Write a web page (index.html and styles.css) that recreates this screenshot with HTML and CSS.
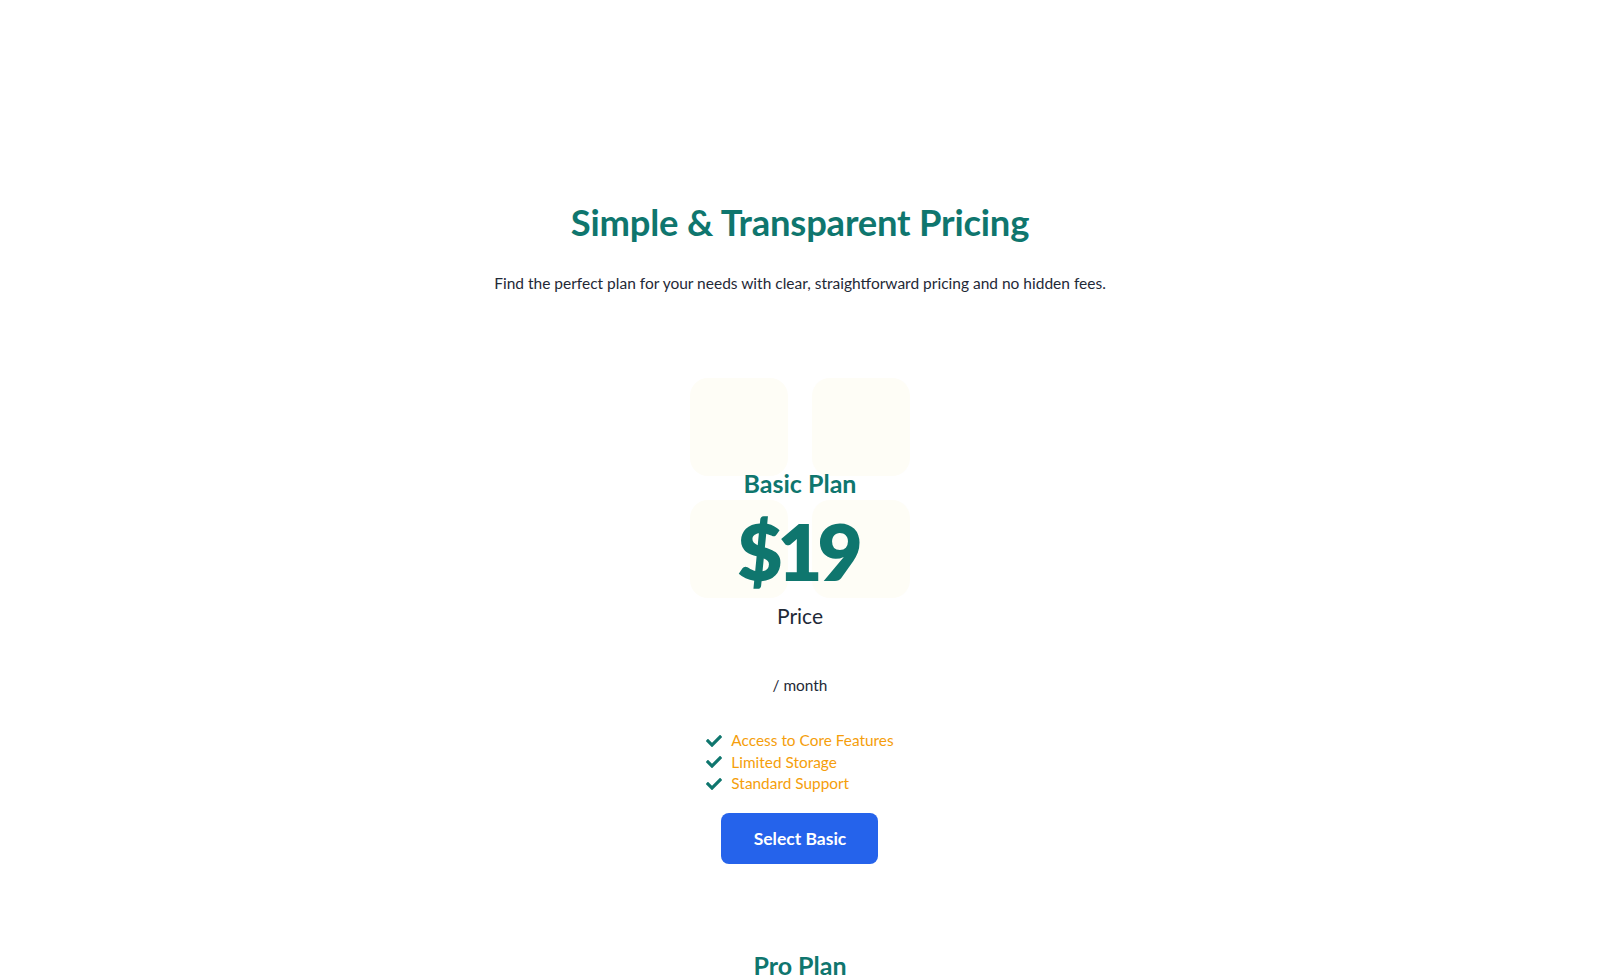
FILE: index.html
```html
<!DOCTYPE html>
<html lang="en">
<head>
<meta charset="utf-8">
<title>Pricing</title>
<link rel="stylesheet" href="styles.css">
</head>
<body>
<main class="page">
  <header class="intro">
    <h1 class="title">Simple &amp; Transparent Pricing</h1>
    <p class="subtitle">Find the perfect plan for your needs with clear, straightforward pricing and no hidden fees.</p>
  </header>

  <section class="plans">
    <article class="plan plan-basic">
      <div class="deco" aria-hidden="true">
        <span></span><span></span><span></span><span></span>
      </div>
      <h2 class="plan-name">Basic Plan</h2>
      <div class="price">$19</div>
      <div class="price-label">Price</div>
      <div class="period">/ month</div>
      <ul class="features">
        <li><svg class="check" viewBox="0 0 512 512"><path d="M173.898 439.404l-166.4-166.4c-9.997-9.997-9.997-26.206 0-36.204l36.203-36.204c9.997-9.998 26.207-9.998 36.204 0L192 312.690 432.095 72.596c9.997-9.997 26.207-9.997 36.204 0l36.203 36.204c9.997 9.997 9.997 26.206 0 36.204l-294.4 294.401c-9.998 9.997-26.207 9.997-36.204-.001z"/></svg>Access to Core Features</li>
        <li><svg class="check" viewBox="0 0 512 512"><path d="M173.898 439.404l-166.4-166.4c-9.997-9.997-9.997-26.206 0-36.204l36.203-36.204c9.997-9.998 26.207-9.998 36.204 0L192 312.690 432.095 72.596c9.997-9.997 26.207-9.997 36.204 0l36.203 36.204c9.997 9.997 9.997 26.206 0 36.204l-294.4 294.401c-9.998 9.997-26.207 9.997-36.204-.001z"/></svg>Limited Storage</li>
        <li><svg class="check" viewBox="0 0 512 512"><path d="M173.898 439.404l-166.4-166.4c-9.997-9.997-9.997-26.206 0-36.204l36.203-36.204c9.997-9.998 26.207-9.998 36.204 0L192 312.690 432.095 72.596c9.997-9.997 26.207-9.997 36.204 0l36.203 36.204c9.997 9.997 9.997 26.206 0 36.204l-294.4 294.401c-9.998 9.997-26.207 9.997-36.204-.001z"/></svg>Standard Support</li>
      </ul>
      <button class="select">Select Basic</button>
    </article>

    <article class="plan plan-pro">
      <h2 class="plan-name">Pro Plan</h2>
    </article>
  </section>
</main>
</body>
</html>
```

FILE: styles.css
```css
html, body {
  margin: 0;
  padding: 0;
  background: #ffffff;
}

body {
  font-family: Lato, "Noto Sans", "DejaVu Sans", sans-serif;
  color: #1f2937;
}

.page {
  padding: 200px 0 0;
  display: flex;
  flex-direction: column;
  align-items: center;
}

.intro {
  display: flex;
  flex-direction: column;
  align-items: center;
}

.title {
  margin: 0;
  font-size: 36.4px;
  line-height: 44px;
  font-weight: 700;
  color: #0f766e;
  letter-spacing: -0.2px;
}

.subtitle {
  margin: 28px 0 0;
  font-size: 15.5px;
  line-height: 22px;
  color: #1f2937;
}

.plans {
  margin-top: 84px;
  display: flex;
  flex-direction: column;
  align-items: center;
}

.plan {
  position: relative;
  display: flex;
  flex-direction: column;
  align-items: center;
}

.plan-basic {
  padding-top: 89px;
}

.deco {
  position: absolute;
  top: 0;
  left: 50%;
  transform: translateX(-50%);
  display: grid;
  grid-template-columns: 98px 98px;
  grid-auto-rows: 98px;
  gap: 24px;
  z-index: 0;
}

.deco span {
  background: #fefdf6;
  border-radius: 18px;
}

.plan > *:not(.deco) {
  position: relative;
  z-index: 1;
}

.plan-name {
  margin: 0;
  font-size: 25px;
  line-height: 32px;
  font-weight: 700;
  color: #0f766e;
}

.price {
  margin-top: 16px;
  font-size: 78px;
  line-height: 72px;
  font-weight: 800;
  color: #0f766e;
  letter-spacing: -5px;
  padding-right: 5px;
}

.price-label {
  margin-top: 15px;
  font-size: 21px;
  line-height: 28px;
  color: #1f2937;
}

.period {
  margin-top: 44px;
  font-size: 15.4px;
  line-height: 22px;
  color: #1f2937;
}

.features {
  list-style: none;
  margin: 34px 0 0;
  padding: 0;
}

.features li {
  display: flex;
  align-items: center;
  gap: 9px;
  font-size: 15.4px;
  line-height: 21.5px;
  color: #f59e0b;
}

.check {
  width: 16px;
  height: 16px;
  fill: #0f766e;
}

.select {
  margin-top: 18px;
  width: 157px;
  height: 51px;
  border: none;
  border-radius: 8px;
  background: #2563eb;
  color: #ffffff;
  font-family: inherit;
  font-size: 17.5px;
  font-weight: 700;
  cursor: pointer;
}

.plan-pro {
  margin-top: 85px;
}
```
